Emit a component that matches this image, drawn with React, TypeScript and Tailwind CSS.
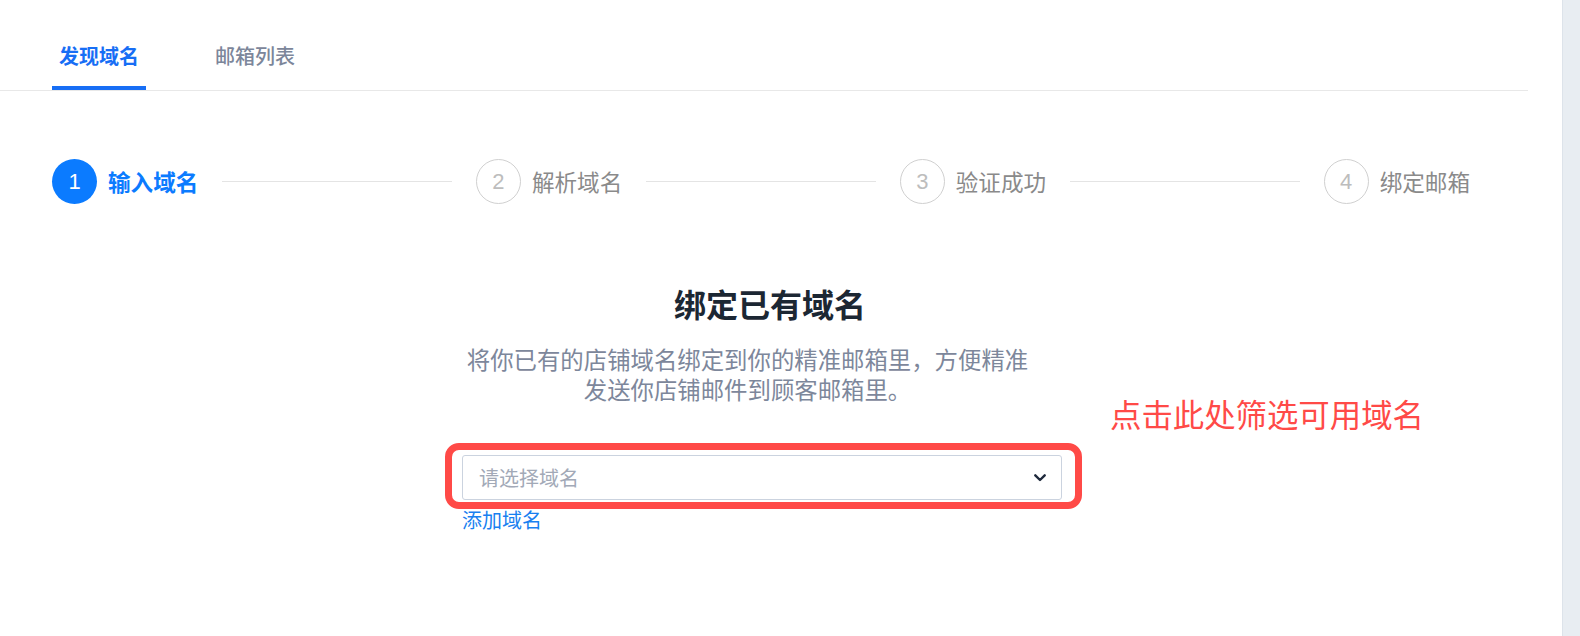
import { useState } from "react";

const font = { fontFamily: '"Noto Sans CJK SC", "Noto Sans", sans-serif' };

const steps = ["输入域名", "解析域名", "验证成功", "绑定邮箱"];

function Step({ n, label, active }: { n: number; label: string; active: boolean }) {
  return (
    <div className="flex shrink-0 items-center gap-[11px]">
      <div
        className={
          active
            ? "flex h-[45px] w-[45px] items-center justify-center rounded-full bg-[#0b7bff] text-[22px] text-white"
            : "flex h-[45px] w-[45px] items-center justify-center rounded-full border-[1.5px] border-[#d0d0d0] text-[22px] text-[#bdbdbd]"
        }
        style={{ fontFamily: '"Liberation Sans", Arial, sans-serif' }}
      >
        {n}
      </div>
      <span
        className={
          active
            ? "text-[22.6px] leading-[30px] font-semibold text-[#0b7bff]"
            : "text-[22.6px] leading-[30px] text-[#8a8a8a]"
        }
      >
        {label}
      </span>
    </div>
  );
}

export default function App() {
  const [tab, setTab] = useState(0);

  return (
    <div className="flex h-[636px] w-full bg-white" style={font}>
      <div className="relative flex-1 bg-white">
        {/* 标签页 */}
        <div className="flex h-[91px] w-[1528px] items-end gap-[62px] border-b border-[#e8e8e8] bg-white pl-[52px]">
          {["发现域名", "邮箱列表"].map((t, i) => (
            <button
              key={t}
              onClick={() => setTab(i)}
              className={
                tab === i
                  ? "border-b-4 border-[#176ef5] px-[7px] pb-[16px] text-[20px] leading-[28px] font-semibold text-[#176ef5]"
                  : "border-b-4 border-transparent px-[7px] pb-[16px] text-[20px] leading-[28px] font-medium text-[#7c869a]"
              }
            >
              {t}
            </button>
          ))}
        </div>

        {/* 步骤条 */}
        <div className="ml-[52px] mt-[68px] flex w-[1418px] items-center">
          {steps.map((s, i) => (
            <div key={s} className={i < steps.length - 1 ? "flex flex-1 items-center" : "flex items-center"}>
              <Step n={i + 1} label={s} active={i === 0} />
              {i < steps.length - 1 && <div className="mx-[24px] h-px flex-1 bg-[#e4e4e4]" />}
            </div>
          ))}
        </div>

        {/* 内容 */}
        <div className="relative ml-[462px] mt-[79px] flex w-[600px] flex-col">
          <h2 className="pl-[16px] text-center text-[32px] leading-[40px] font-bold text-[#1c2733]">绑定已有域名</h2>
          <p className="mt-[21px] pr-[29px] text-center text-[23.4px] leading-[30px] text-[#7d879b]">
            <span className="block">将你已有的店铺域名绑定到你的精准邮箱里，方便精准</span>
            <span className="block">发送你店铺邮件到顾客邮箱里。</span>
          </p>

          <div className="relative mt-[51px]">
            <div className="pointer-events-none absolute -bottom-[9px] -left-[17px] -right-[20px] -top-[12px] rounded-[14px] border-[7px] border-[#ff4a47]" />
            <div className="relative flex h-[45px] items-center justify-between rounded-[3px] border border-[#cbd3df] bg-white pl-[16px] pr-[15px]">
              <span className="text-[20px] text-[#a2a9b7]">请选择域名</span>
              <svg width="12" height="8" viewBox="0 0 12 8" fill="none">
                <path d="M1.3 1.3 6 6 10.7 1.3" stroke="#1f2a3c" strokeWidth="2.4" strokeLinecap="round" strokeLinejoin="round" />
              </svg>
            </div>
          </div>

          <a className="mt-[8px] w-fit cursor-pointer text-[20px] leading-[24px] text-[#1880f0]">添加域名</a>

          <span className="absolute left-[648px] top-[111px] whitespace-nowrap text-[31.4px] leading-[40px] text-[#ff4a47]">
            点击此处筛选可用域名
          </span>
        </div>
      </div>
      <div className="w-[18px] shrink-0 border-l border-[#dde3ea] bg-[#e8edf2]" />
    </div>
  );
}
